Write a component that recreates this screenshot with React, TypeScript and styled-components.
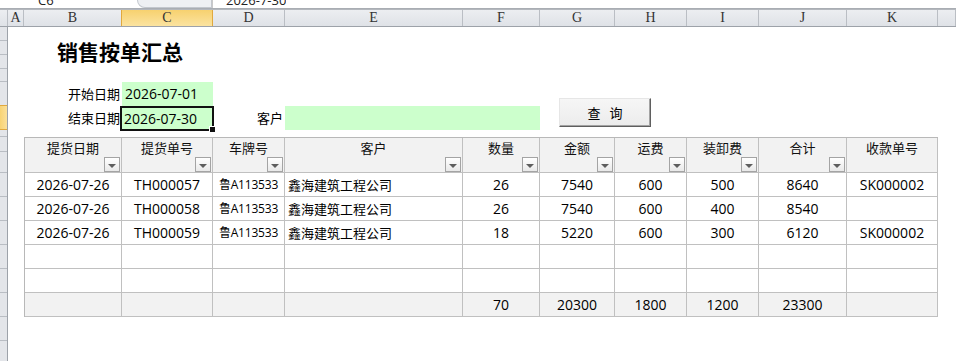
import styled, { createGlobalStyle, css } from "styled-components";

// widths of sheet columns B..K
const COLS = [98, 91, 72, 178, 77, 75, 72, 72, 88, 91];
const LETTERS = ["B", "C", "D", "E", "F", "G", "H", "I", "J", "K"];
const ROW_HEIGHTS = [14, 14, 14, 13, 24, 24, 7, 15, 21, 24, 24, 24, 24, 24, 24, 24, 24];
const ACTIVE_ROW = 5;

const HEADERS = [
  { label: "提货日期", filter: true },
  { label: "提货单号", filter: true },
  { label: "车牌号", filter: true },
  { label: "客户", filter: true },
  { label: "数量", filter: true },
  { label: "金额", filter: true },
  { label: "运费", filter: true },
  { label: "装卸费", filter: true },
  { label: "合计", filter: true },
  { label: "收款单号", filter: false },
];

const ROWS = [
  ["2026-07-26", "TH000057", "鲁A113533", "鑫海建筑工程公司", "26", "7540", "600", "500", "8640", "SK000002"],
  ["2026-07-26", "TH000058", "鲁A113533", "鑫海建筑工程公司", "26", "7540", "600", "400", "8540", ""],
  ["2026-07-26", "TH000059", "鲁A113533", "鑫海建筑工程公司", "18", "5220", "600", "300", "6120", "SK000002"],
  ["", "", "", "", "", "", "", "", "", ""],
  ["", "", "", "", "", "", "", "", "", ""],
];

const TOTALS = ["", "", "", "", "70", "20300", "1800", "1200", "23300", ""];

const GlobalStyle = createGlobalStyle`
  html, body {
    margin: 0;
    padding: 0;
    background: #fff;
    overflow: hidden;
  }
  body {
    font-family: "Open Sans", "Noto Sans CJK SC", sans-serif;
    color: #000;
  }
`;

const Window = styled.div`
  width: 956px;
  height: 361px;
  overflow: hidden;
  display: flex;
  flex-direction: column;
  background: #fff;
`;

// only the lower edge of the formula bar is in view
const FormulaBar = styled.div`
  flex: none;
  height: 8px;
  display: flex;
  overflow: hidden;
  border-bottom: 1px solid #a9adb3;
`;

const ClippedText = styled.div<{ $width?: number; $pad: number; $divider?: boolean }>`
  width: ${(p) => (p.$width ? `${p.$width}px` : "auto")};
  height: 8px;
  box-sizing: border-box;
  padding-left: ${(p) => p.$pad}px;
  overflow: hidden;
  font-size: 13px;
  line-height: 0;
  color: #222;
  border-left: ${(p) => (p.$divider ? "1px solid #c9c9c9" : "none")};
`;

const FxTab = styled.div`
  width: 75px;
  height: 8px;
  box-sizing: border-box;
  background: #eef0f3;
  border: 1px solid #c3c7cd;
  border-top: none;
  border-radius: 0 0 0 9px;
`;

const ColumnBar = styled.div`
  flex: none;
  display: grid;
  grid-template-columns: 8px 16px ${COLS.map((w) => `${w}px`).join(" ")} 1fr;
  height: 16px;
  background: linear-gradient(#eceef1, #dfe2e7);
  border-top: 1px solid #b3b7bd;
  border-bottom: 1px solid #9da2a9;
`;

const ColHead = styled.div<{ $active?: boolean }>`
  border-right: 1px solid #babec4;
  font-family: "Liberation Serif", serif;
  font-size: 14px;
  line-height: 16px;
  text-align: center;
  color: #333;
  ${(p) =>
    p.$active &&
    css`
      background: linear-gradient(#f7d16f, #fbe3a0);
      border-right-color: #e1a93e;
      border-left: 1px solid #e1a93e;
      margin-left: -1px;
    `}
`;

const Body = styled.div`
  display: flex;
  flex: 1;
  min-height: 0;
  overflow: hidden;
`;

const RowHeaders = styled.div`
  flex: none;
  width: 7px;
  display: flex;
  flex-direction: column;
  background: #e3e5e9;
  border-right: 1px solid #9da2a9;
`;

const RowMark = styled.div<{ $h: number; $active?: boolean }>`
  height: ${(p) => p.$h}px;
  flex: none;
  box-sizing: border-box;
  border-bottom: 1px solid #b9bdc3;
  ${(p) =>
    p.$active &&
    css`
      background: linear-gradient(90deg, #f8d373, #fbe09a);
      border-bottom-color: #e1a93e;
      border-top: 1px solid #e1a93e;
      margin-top: -1px;
      height: ${p.$h + 1}px;
    `}
`;

const Content = styled.div`
  padding-left: 16px;
  display: flex;
  flex-direction: column;
`;

const Title = styled.h1`
  flex: none;
  margin: 0;
  height: 55px;
  box-sizing: border-box;
  padding: 11px 0 0 33px;
  font-family: "Noto Sans CJK SC", sans-serif;
  font-size: 21px;
  line-height: 26px;
  font-weight: 700;
`;

const FormGrid = styled.div`
  flex: none;
  display: grid;
  grid-template-columns: ${COLS.map((w) => `${w}px`).join(" ")};
  grid-template-rows: 24px 24px;
`;

const Label = styled.div<{ $col: number; $row: number }>`
  grid-column: ${(p) => p.$col};
  grid-row: ${(p) => p.$row};
  text-align: right;
  padding-right: 2px;
  font-family: "Noto Sans CJK SC", sans-serif;
  font-size: 13px;
  line-height: 24px;
`;

const InputCell = styled.div<{ $col: string; $row: number; $selected?: boolean }>`
  grid-column: ${(p) => p.$col};
  grid-row: ${(p) => p.$row};
  background: #ccffcc;
  font-size: 14px;
  line-height: 24px;
  padding-left: 3px;
  position: relative;
  ${(p) =>
    p.$selected &&
    css`
      margin: 0 -1px -1px -2px;
      border: 2px solid #111;
      line-height: 22px;
      padding-left: 2px;
      &::after {
        content: "";
        position: absolute;
        right: -4px;
        bottom: -4px;
        width: 5px;
        height: 5px;
        background: #111;
        border: 1px solid #fff;
      }
    `}
`;

const QueryButton = styled.button`
  grid-column: 6 / 8;
  grid-row: 1 / 3;
  align-self: end;
  justify-self: start;
  margin: 0 0 3px 19px;
  width: 92px;
  height: 29px;
  padding: 0;
  background: linear-gradient(#f6f6f6, #ececec);
  border: 1px solid;
  border-color: #e6e6e6 #5f5f5f #5f5f5f #e6e6e6;
  box-shadow: inset -1px -1px 0 #a3a3a3;
  font-family: "Noto Sans CJK SC", sans-serif;
  font-size: 13px;
  word-spacing: 6px;
  color: #000;
`;

const Spacer = styled.div`
  flex: none;
  height: 7px;
`;

const Table = styled.div`
  flex: none;
  display: grid;
  grid-template-columns: ${COLS.map((w, i) => `${i === 0 ? w - 1 : w}px`).join(" ")};
  border-top: 1px solid #b8b8b8;
  border-left: 1px solid #b8b8b8;
  width: 914px;
  box-sizing: border-box;
`;

const HeadCell = styled.div`
  height: 35px;
  box-sizing: border-box;
  background: #f2f2f2;
  border-right: 1px solid #c0c0c0;
  border-bottom: 1px solid #c0c0c0;
  display: flex;
  flex-direction: column;
  align-items: center;
  padding-top: 1px;
  font-family: "Noto Sans CJK SC", sans-serif;
  font-size: 13px;
  line-height: 18px;
  color: #111;
`;

const FilterButton = styled.span`
  margin-top: auto;
  align-self: flex-end;
  width: 16px;
  height: 15px;
  box-sizing: border-box;
  margin-right: 1px;
  border: 1px solid #a4a4a4;
  background: linear-gradient(#ffffff, #e9e9e9);
  display: flex;
  align-items: center;
  justify-content: center;
  &::after {
    content: "";
    border-left: 4px solid transparent;
    border-right: 4px solid transparent;
    border-top: 4px solid #5e5e5e;
    margin-top: 2px;
  }
`;

const Cell = styled.div<{ $variant?: "text" | "plate"; $total?: boolean }>`
  height: 24px;
  box-sizing: border-box;
  border-right: 1px solid #c0c0c0;
  border-bottom: 1px solid #c0c0c0;
  background: ${(p) => (p.$total ? "#f2f2f2" : "#fff")};
  font-size: 14px;
  line-height: 23px;
  text-align: center;
  white-space: nowrap;
  overflow: hidden;
  ${(p) =>
    p.$variant === "text" &&
    css`
      text-align: left;
      padding-left: 3px;
      font-family: "Noto Sans CJK SC", sans-serif;
      font-size: 13px;
    `}
  ${(p) =>
    p.$variant === "plate" &&
    css`
      font-size: 12px;
      letter-spacing: -0.2px;
    `}
`;

const variantFor = (i: number) => (i === 3 ? "text" : i === 2 ? "plate" : undefined);

const App = () => {
  return (
    <Window>
      <GlobalStyle />
      <FormulaBar>
        <ClippedText $width={137} $pad={38}>
          C6
        </ClippedText>
        <FxTab />
        <ClippedText $pad={13} $divider>
          2026-7-30
        </ClippedText>
      </FormulaBar>
      <ColumnBar>
        <ColHead />
        <ColHead>A</ColHead>
        {LETTERS.map((l) => (
          <ColHead key={l} $active={l === "C"}>
            {l}
          </ColHead>
        ))}
        <ColHead />
      </ColumnBar>
      <Body>
        <RowHeaders>
          {ROW_HEIGHTS.map((h, i) => (
            <RowMark key={i} $h={h} $active={i === ACTIVE_ROW} />
          ))}
        </RowHeaders>
        <Content>
          <Title>销售按单汇总</Title>
          <FormGrid>
            <Label $col={1} $row={1}>开始日期</Label>
            <InputCell $col="2" $row={1}>2026-07-01</InputCell>
            <Label $col={1} $row={2}>结束日期</Label>
            <InputCell $col="2" $row={2} $selected>
              2026-07-30
            </InputCell>
            <Label $col={3} $row={2}>客户</Label>
            <InputCell $col="4 / 6" $row={2} />
            <QueryButton>查 询</QueryButton>
          </FormGrid>
          <Spacer />
          <Table>
            {HEADERS.map((h) => (
              <HeadCell key={h.label}>
                {h.label}
                {h.filter && <FilterButton />}
              </HeadCell>
            ))}
            {ROWS.map((row, r) =>
              row.map((v, i) => (
                <Cell key={`${r}-${i}`} $variant={variantFor(i)}>
                  {v}
                </Cell>
              ))
            )}
            {TOTALS.map((v, i) => (
              <Cell key={`t-${i}`} $total>
                {v}
              </Cell>
            ))}
          </Table>
        </Content>
      </Body>
    </Window>
  );
};

export default App;
